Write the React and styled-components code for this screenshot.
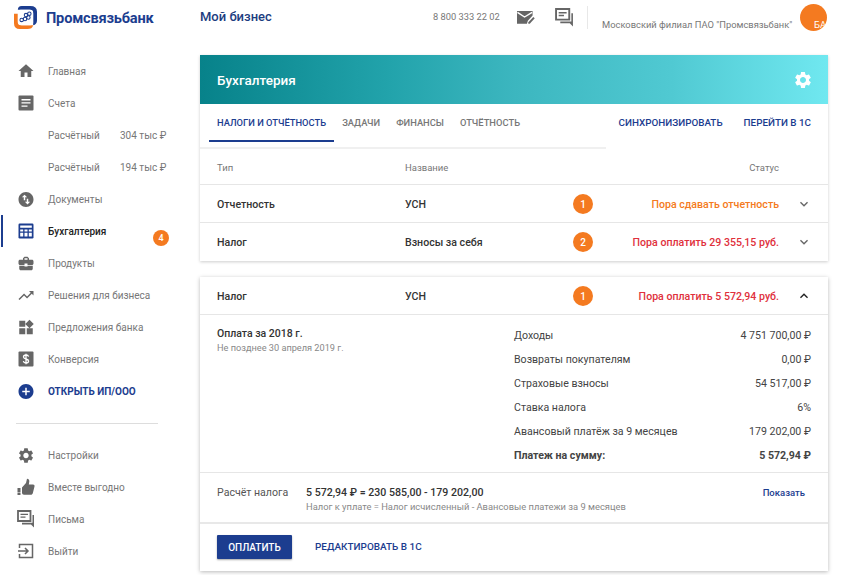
import React from "react";
import styled, { createGlobalStyle } from "styled-components";
import {
  MdHome, MdSwapVerticalCircle, MdBusinessCenter, MdTrendingUp, MdWidgets,
  MdAddCircle, MdSettings, MdKeyboardArrowDown, MdKeyboardArrowUp,
} from "react-icons/md";

const GlobalStyle = createGlobalStyle`
  html, body { margin: 0; padding: 0; background: #fff; }
  body { font-family: Roboto, "Liberation Sans", sans-serif; color: #333; overflow: hidden; }
  * { box-sizing: border-box; }
`;

const ICON = "#666";
const NAVY = "#1c3d8f";

const LogoIcon = () => (
  <svg width="23" height="23" viewBox="0 0 24 24">
    <path d="M0 8 V18 Q0 24 6 24 H14 Q19 24 20 20 H8 Q4 20 4 16 V8 Z" fill="#f47a20" />
    <path d="M8 0 H17 Q24 0 24 6 V15 Q24 19 20 20 V8 Q20 4 16 4 H4 Q4 0 8 0 Z" fill="#1c3d8f" />
    <rect x="4" y="4" width="16" height="16" rx="3" fill="#fff" />
    <g fill="none" stroke="#1c3d8f" strokeWidth="1.1">
      <circle cx="8" cy="14.5" r="1.8" />
      <circle cx="11.5" cy="13.5" r="1.8" />
      <circle cx="15" cy="12" r="1.8" />
      <circle cx="16" cy="8" r="1.8" />
      <circle cx="12.5" cy="9.5" r="1.8" />
    </g>
  </svg>
);

const ListIcon = () => (
  <svg width="16" height="16" viewBox="0 0 16 16">
    <rect width="15" height="15" x=".5" y=".5" rx="1" fill={ICON} />
    <path d="M3.5 4h9v1.4h-9zM3.5 7.2h9v1.4h-9zM3.5 10.4h6v1.4h-6z" fill="#fff" />
  </svg>
);

const TableIcon = () => (
  <svg width="16" height="16" viewBox="0 0 16 16">
    <rect x=".5" y=".5" width="15" height="15" rx="1.2" fill={NAVY} />
    <path d="M2.2 2.4h11.6v2.4H2.2zM2.2 6.4h3v2.2h-3zM6.5 6.4h3v2.2h-3zM10.8 6.4h3v2.2h-3zM2.2 9.8h3v3.8h-3zM6.5 9.8h3v3.8h-3zM10.8 9.8h3v3.8h-3z" fill="#fff" />
  </svg>
);

const DollarIcon = () => (
  <svg width="16" height="16" viewBox="0 0 16 16">
    <rect x=".5" y=".5" width="15" height="15" rx="1" fill={ICON} />
    <path d="M10.6 5.6C10.3 4.6 9.3 4 8 4 6.5 4 5.5 4.8 5.5 6s1 1.6 2.5 2 2.6.9 2.6 2.1S9.5 12 8 12c-1.4 0-2.4-.7-2.7-1.8M8 2.8v10.4" fill="none" stroke="#fff" strokeWidth="1.3" />
  </svg>
);

const ThumbIcon = () => (
  <svg width="18" height="18" viewBox="0 0 18 18">
    <path d="M.5 10h3v4.5h-3zM.5 15h3v2h-3z" fill={ICON} />
    <path d="M5 9.5 9 5 10 .8c1.5 0 2.5 1.2 2.3 2.8L11.8 6.5H16c1.1 0 1.8.9 1.5 2l-1.7 6.8c-.2.9-1 1.5-1.9 1.5H7c-1.1 0-2-.9-2-2z" fill={ICON} />
  </svg>
);

const ChatIcon = ({ size = 18 }) => (
  <svg width={size} height={size} viewBox="0 0 18 18">
    <path d="M1 1h12.5v10H1z" fill="none" stroke={ICON} strokeWidth="1.8" />
    <path d="M3.5 3.8H11v1.3H3.5zM3.5 6.5h5v1.3h-5z" fill={ICON} />
    <path d="M15.500 5H17v12.5l-3-3H5v-1.700h10.500z" fill={ICON} />
  </svg>
);

const ExitIcon = () => (
  <svg width="16" height="16" viewBox="0 0 16 16" fill="none" stroke={ICON} strokeWidth="1.5">
    <path d="M1.5 5V1.5h13v13h-13V11" />
    <path d="M0 8h9.5M7 5l3 3-3 3" />
  </svg>
);

const MailPenIcon = () => (
  <svg width="19" height="17" viewBox="0 0 20 18">
    <path d="M1 2h16.500v5l-5 5.500-1 3H1z" fill={ICON} />
    <path d="M1.500 3.500 9 8.500l8-5" fill="none" stroke="#fff" strokeWidth="1.5" />
    <path d="M13 14l5.300-5.600 1.500 1.400L14.500 15.500H13z" fill={ICON} />
  </svg>
);

const Page = styled.div`
  width: 848px;
  height: 575px;
  overflow: hidden;
  display: flex;
  flex-direction: column;
`;

const Header = styled.header`
  height: 55px;
  flex: none;
  display: flex;
  align-items: flex-start;
  position: relative;
`;

const Brand = styled.div`
  width: 200px;
  flex: none;
  height: 34px;
  padding-left: 14px;
  display: flex;
  align-items: center;
  gap: 9px;
`;

const BrandName = styled.div`
  font-size: 14.6px;
  font-weight: 700;
  letter-spacing: -0.2px;
  color: #1c3d8f;
  margin-top: 1px;
`;

const Product = styled.div`
  font-size: 13px;
  font-weight: 500;
  color: #1c3d7f;
  line-height: 34px;
  width: 233px;
  flex: none;
`;

const Phone = styled.div`
  font-size: 9.3px;
  color: #777;
  line-height: 34px;
  width: 83px;
  flex: none;
`;

const TopIcon = styled.div`
  width: ${p => p.$w}px;
  height: 34px;
  flex: none;
  display: flex;
  align-items: center;
`;

const Branch = styled.div`
  border-left: 1px solid #e8e8e8;
  margin: 6px 0 0 6px;
  height: 23px;
  padding: 13px 0 0 14px;
  font-size: 9.35px;
  line-height: 11px;
  color: #777;
  white-space: nowrap;
  flex: none;
`;

const Avatar = styled.div`
  position: absolute;
  left: 800px;
  top: 4px;
  width: 27px;
  height: 27px;
  border-radius: 50%;
  overflow: hidden;
  background: #f47a20;
  color: #fff;
  font-size: 9.5px;
  padding: 15px 0 0 14px;
  line-height: 11px;
`;

const Body = styled.div`
  display: flex;
  flex: 1;
  min-height: 0;
`;

const Sidebar = styled.nav`
  width: 200px;
  flex: none;
`;

const NavRow = styled.div`
  height: 32px;
  display: flex;
  align-items: center;
  position: relative;
  padding-left: ${p => (p.$active ? "45px" : "48px")};
  font-size: 10px;
  color: ${p => (p.$active ? "#222" : p.$accent ? NAVY : "#777")};
  font-weight: ${p => (p.$accent ? 700 : p.$active ? 500 : 400)};
  border-left: ${p => (p.$active ? `2px solid ${NAVY}` : "none")};
  margin-left: ${p => (p.$active ? "1px" : "0")};
`;

const NavIcon = styled.span`
  position: absolute;
  left: ${p => (p.$active ? "14px" : "17px")};
  top: 7px;
  width: 18px;
  height: 18px;
  display: flex;
  align-items: center;
  justify-content: center;
`;

const Amount = styled.span`
  margin-left: auto;
  width: 80px;
`;

const Badge = styled.span`
  width: ${p => p.$size || 20}px;
  height: ${p => p.$size || 20}px;
  border-radius: 50%;
  background: #f47a20;
  color: #fff;
  font-size: ${p => (p.$size ? 9 : 10)}px;
  font-weight: 500;
  display: flex;
  align-items: center;
  justify-content: center;
`;

const NavBadge = styled(Badge)`
  position: absolute;
  left: 150px;
  top: 15px;
`;

const Divider = styled.div`
  height: 1px;
  background: #ddd;
  margin: 16px 42px 15px 16px;
`;

const Main = styled.main`
  width: 628px;
  flex: none;
`;

const Panel = styled.section`
  background: #fff;
  box-shadow: 0 1px 3px rgba(0, 0, 0, 0.2);
`;

const Banner = styled.div`
  height: 49px;
  padding: 0 15px 0 17px;
  background: linear-gradient(90deg, #07828a 0%, #22a3ab 30%, #3cb6bf 50%, #50c9d2 75%, #70e8f0 100%);
  color: #fff;
  font-size: 13.5px;
  font-weight: 500;
  display: flex;
  align-items: center;
  justify-content: space-between;
`;

const Toolbar = styled.div`
  height: 45px;
  display: flex;
  justify-content: space-between;
`;

const Tabs = styled.div`
  width: 406px;
  height: 45px;
  padding-left: 17px;
  display: flex;
  gap: 16px;
  border-bottom: 2px solid #f0f0f0;
`;

const Tab = styled.div`
  position: relative;
  line-height: 38px;
  font-size: 9.35px;
  font-weight: 500;
  color: ${p => (p.$active ? NAVY : "#777")};
  &::after {
    content: "";
    display: ${p => (p.$active ? "block" : "none")};
    position: absolute;
    left: -8px;
    right: -8px;
    top: 36px;
    height: 1.5px;
    background: ${NAVY};
  }
`;

const Actions = styled.div`
  display: flex;
  gap: 21px;
  padding-right: 17px;
`;

const Action = styled.div`
  line-height: 38px;
  font-size: 9.85px;
  font-weight: 500;
  color: ${NAVY};
`;

const Row = styled.div`
  display: grid;
  grid-template-columns: 188px 168px 20px 1fr 49px;
  align-items: center;
  padding: 1px 0 0 17px;
  height: ${p => p.$h || 38}px;
  border-bottom: 1px solid ${p => (p.$last ? "transparent" : "#e6e6e6")};
  font-size: 10.6px;
  font-weight: 500;
  color: #333;
`;

const HeadCell = styled.div`
  font-size: 9.5px;
  font-weight: 400;
  color: #777;
  text-align: ${p => (p.$right ? "right" : "left")};
`;

const Status = styled.div`
  text-align: right;
  font-size: 10.6px;
  color: ${p => (p.$warn ? "#f47a20" : "#e0303c")};
`;

const Chevron = styled.div`
  display: flex;
  justify-content: center;
`;

const SecondPanel = styled(Panel)`
  margin-top: 16px;
  box-shadow: 0 1px 4px rgba(0, 0, 0, 0.28);
`;

const Details = styled.div`
  height: 158px;
  padding: 8px 17px 0;
  display: grid;
  grid-template-columns: 297px 1fr;
  border-bottom: 1px solid #e6e6e6;
`;

const PayTitle = styled.div`
  font-size: 10.5px;
  font-weight: 500;
  color: #333;
  margin-top: 5px;
  line-height: 12px;
`;

const PaySub = styled.div`
  font-size: 9.2px;
  color: #888;
  margin-top: 2px;
`;

const Facts = styled.div`
  display: flex;
  flex-direction: column;
`;

const Fact = styled.div`
  height: 24px;
  display: flex;
  align-items: center;
  justify-content: space-between;
  font-size: 10.6px;
  color: #444;
  font-weight: ${p => (p.$bold ? 700 : 400)};
`;

const Calc = styled.div`
  height: 51px;
  padding: 14px 23px 0 17px;
  display: grid;
  grid-template-columns: 89px 1fr auto;
  border-bottom: 2px solid #e8e8e8;
  font-size: 10.6px;
  color: #555;
  line-height: 12px;
`;

const Formula = styled.div`
  font-weight: 500;
  color: #333;
`;

const Hint = styled.div`
  font-size: 9.35px;
  font-weight: 400;
  color: #888;
  margin-top: 2px;
`;

const ShowLink = styled.div`
  font-size: 9.5px;
  font-weight: 500;
  color: ${NAVY};
`;

const Footer = styled.div`
  height: 47px;
  padding: 11px 17px 0;
  display: flex;
  gap: 23px;
`;

const PayButton = styled.div`
  width: 75px;
  height: 24px;
  background: ${NAVY};
  border-radius: 1px;
  color: #fff;
  font-size: 10px;
  font-weight: 500;
  display: flex;
  align-items: center;
  justify-content: center;
  box-shadow: 0 1px 2px rgba(0, 0, 0, 0.35);
`;

const TextButton = styled.div`
  font-size: 9.95px;
  font-weight: 500;
  color: ${NAVY};
  line-height: 24px;
`;

const topNav = [
  { label: "Главная", icon: <MdHome size={20} color={ICON} /> },
  { label: "Счета", icon: <ListIcon /> },
  { label: "Расчётный", amount: "304 тыс ₽" },
  { label: "Расчётный", amount: "194 тыс ₽" },
  { label: "Документы", icon: <MdSwapVerticalCircle size={19} color={ICON} /> },
  { label: "Бухгалтерия", icon: <TableIcon />, active: true, badge: "4" },
  { label: "Продукты", icon: <MdBusinessCenter size={19} color={ICON} /> },
  { label: "Решения для бизнеса", icon: <MdTrendingUp size={19} color={ICON} /> },
  { label: "Предложения банка", icon: <MdWidgets size={19} color={ICON} /> },
  { label: "Конверсия", icon: <DollarIcon /> },
  { label: "ОТКРЫТЬ ИП/ООО", icon: <MdAddCircle size={19} color={NAVY} />, accent: true },
];

const bottomNav = [
  { label: "Настройки", icon: <MdSettings size={19} color={ICON} /> },
  { label: "Вместе выгодно", icon: <ThumbIcon /> },
  { label: "Письма", icon: <ChatIcon /> },
  { label: "Выйти", icon: <ExitIcon /> },
];

const facts = [
  ["Доходы", "4 751 700,00 ₽"],
  ["Возвраты покупателям", "0,00 ₽"],
  ["Страховые взносы", "54 517,00 ₽"],
  ["Ставка налога", "6%"],
  ["Авансовый платёж за 9 месяцев", "179 202,00 ₽"],
  ["Платеж на сумму:", "5 572,94 ₽", true],
];

const NavItem = ({ item }) => (
  <NavRow $active={item.active} $accent={item.accent}>
    {item.icon && <NavIcon $active={item.active}>{item.icon}</NavIcon>}
    {item.label}
    {item.amount && <Amount>{item.amount}</Amount>}
    {item.badge && <NavBadge $size={16}>{item.badge}</NavBadge>}
  </NavRow>
);

export default function App() {
  return (
    <Page>
      <GlobalStyle />
      <Header>
        <Brand>
          <LogoIcon />
          <BrandName>Промсвязьбанк</BrandName>
        </Brand>
        <Product>Мой бизнес</Product>
        <Phone>8 800 333 22 02</Phone>
        <TopIcon $w={39}><MailPenIcon /></TopIcon>
        <TopIcon $w={26}><ChatIcon size={19} /></TopIcon>
        <Branch>Московский филиал ПАО "Промсвязьбанк"</Branch>
        <Avatar>БА</Avatar>
      </Header>
      <Body>
        <Sidebar>
          {topNav.map((item, i) => <NavItem key={i} item={item} />)}
          <Divider />
          {bottomNav.map((item, i) => <NavItem key={i} item={item} />)}
        </Sidebar>
        <Main>
          <Panel>
            <Banner>
              Бухгалтерия
              <MdSettings size={20} color="#fff" />
            </Banner>
            <Toolbar>
              <Tabs>
                <Tab $active>НАЛОГИ И ОТЧЁТНОСТЬ</Tab>
                <Tab>ЗАДАЧИ</Tab>
                <Tab>ФИНАНСЫ</Tab>
                <Tab>ОТЧЁТНОСТЬ</Tab>
              </Tabs>
              <Actions>
                <Action>СИНХРОНИЗИРОВАТЬ</Action>
                <Action>ПЕРЕЙТИ В 1С</Action>
              </Actions>
            </Toolbar>
            <Row $h={36}>
              <HeadCell>Тип</HeadCell>
              <HeadCell>Название</HeadCell>
              <span />
              <HeadCell $right>Статус</HeadCell>
              <span />
            </Row>
            <Row>
              <div>Отчетность</div>
              <div>УСН</div>
              <Badge>1</Badge>
              <Status $warn>Пора сдавать отчетность</Status>
              <Chevron><MdKeyboardArrowDown size={16} color="#666" /></Chevron>
            </Row>
            <Row $last>
              <div>Налог</div>
              <div>Взносы за себя</div>
              <Badge>2</Badge>
              <Status>Пора оплатить 29 355,15 руб.</Status>
              <Chevron><MdKeyboardArrowDown size={16} color="#666" /></Chevron>
            </Row>
          </Panel>
          <SecondPanel>
            <Row>
              <div>Налог</div>
              <div>УСН</div>
              <Badge>1</Badge>
              <Status>Пора оплатить 5 572,94 руб.</Status>
              <Chevron><MdKeyboardArrowUp size={16} color="#222" /></Chevron>
            </Row>
            <Details>
              <div>
                <PayTitle>Оплата за 2018 г.</PayTitle>
                <PaySub>Не позднее 30 апреля 2019 г.</PaySub>
              </div>
              <Facts>
                {facts.map(([label, value, bold]) => (
                  <Fact key={label} $bold={bold}>
                    <span>{label}</span>
                    <span>{value}</span>
                  </Fact>
                ))}
              </Facts>
            </Details>
            <Calc>
              <div>Расчёт налога</div>
              <Formula>
                5 572,94 ₽ = 230 585,00 - 179 202,00
                <Hint>Налог к уплате = Налог исчисленный - Авансовые платежи за 9 месяцев</Hint>
              </Formula>
              <ShowLink>Показать</ShowLink>
            </Calc>
            <Footer>
              <PayButton>ОПЛАТИТЬ</PayButton>
              <TextButton>РЕДАКТИРОВАТЬ В 1С</TextButton>
            </Footer>
          </SecondPanel>
        </Main>
      </Body>
    </Page>
  );
}
